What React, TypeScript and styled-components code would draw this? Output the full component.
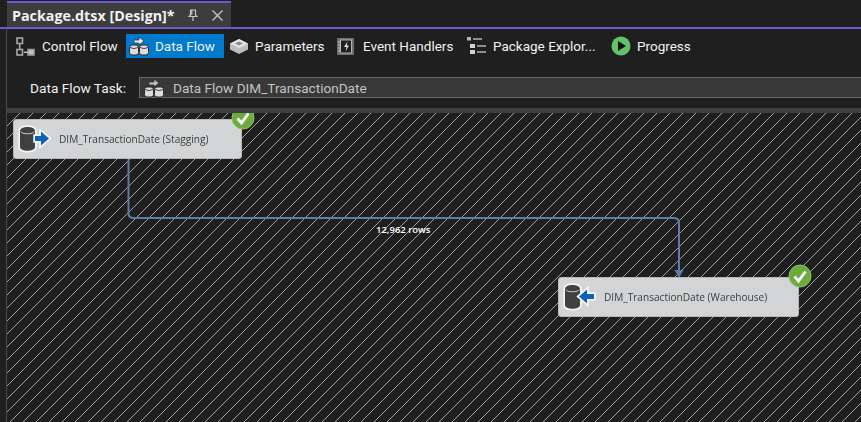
import { FC } from 'react';
import styled, { createGlobalStyle } from 'styled-components';

const GlobalStyle = createGlobalStyle`
  html, body {
    margin: 0;
    padding: 0;
    width: 861px;
    height: 422px;
    overflow: hidden;
    background: #1f1f1f;
    font-family: "Open Sans", "Noto Sans", sans-serif;
  }
`;

const Page = styled.div`
  width: 861px;
  height: 422px;
  display: flex;
  flex-direction: column;
  background: #1f1f1f;
  color: #f1f1f1;
  overflow: hidden;
`;

const TabStrip = styled.div`
  height: 27px;
  padding-left: 7px;
  border-bottom: 2px solid #6a5acd;
  display: flex;
  flex-shrink: 0;
`;

const Tab = styled.div`
  width: 224px;
  height: 26px;
  margin-top: 1px;
  border-top: 2px solid #6a5acd;
  box-sizing: border-box;
  background: #3d3d3d;
  display: flex;
  align-items: center;
  padding-left: 5px;
`;

const TabTitle = styled.span`
  font-size: 14.300px;
  font-weight: 700;
  white-space: nowrap;
  width: 176px;
  color: #f1f1f1;
`;

const PinIcon = styled.svg`
  flex-shrink: 0;
`;

const CloseIcon = styled.svg`
  margin-left: 14px;
  flex-shrink: 0;
`;

const Body = styled.div`
  flex: 1;
  margin-left: 6px;
  border-left: 1px solid #4a4a4a;
  display: flex;
  flex-direction: column;
  min-height: 0;
`;

const Toolbar = styled.div`
  height: 24px;
  margin-top: 5px;
  padding-left: 6px;
  display: flex;
  align-items: center;
  flex-shrink: 0;
`;

const ToolItem = styled.div<{ $active?: boolean; $width: number; $after?: number }>`
  width: ${p => p.$width}px;
  margin-right: ${p => p.$after ?? 0}px;
  height: 24px;
  box-sizing: border-box;
  display: flex;
  align-items: center;
  padding-left: 3px;
  font-family: "Roboto", "Open Sans", sans-serif;
  font-size: 13.500px;
  white-space: nowrap;
  color: #f1f1f1;
  background: ${p => (p.$active ? '#007acc' : 'transparent')};
`;

const IconSlot = styled.span`
  width: 26px;
  height: 20px;
  flex-shrink: 0;
  display: flex;
  align-items: center;
`;

const TaskRow = styled.div`
  height: 21px;
  margin-top: 19px;
  padding-left: 23px;
  display: flex;
  align-items: center;
  flex-shrink: 0;
`;

const TaskLabel = styled.span`
  width: 109px;
  font-family: "Roboto", "Open Sans", sans-serif;
  font-size: 13.700px;
  white-space: nowrap;
`;

const Combo = styled.div`
  flex: 1;
  height: 21px;
  box-sizing: border-box;
  border: 1px solid #6a6a6a;
  border-right: none;
  background: #383838;
  display: flex;
  align-items: center;
  gap: 8px;
  padding-left: 4px;
  font-family: "Roboto", "Open Sans", sans-serif;
  font-size: 13.600px;
  color: #c4c4c4;
  white-space: nowrap;
`;

const Strip = styled.div`
  height: 5px;
  margin-top: 10px;
  background: #3c4043;
  flex-shrink: 0;
`;

const Canvas = styled.div`
  position: relative;
  flex: 1;
  background: #1f1f1f;
  overflow: hidden;
`;

const Drawing = styled.svg`
  position: absolute;
  left: 0;
  top: 0;
`;

const Node = styled.div<{ $x: number; $y: number; $width: number }>`
  position: absolute;
  left: ${p => p.$x}px;
  top: ${p => p.$y}px;
  width: ${p => p.$width}px;
  height: 40px;
  box-sizing: border-box;
  border-radius: 3px;
  background: #d3d4d6;
  border: 1px solid #b8b8b8;
  display: flex;
  align-items: center;
  padding-left: 3px;
`;

const NodeText = styled.span`
  margin-left: 8px;
  font-size: 10.100px;
  color: #3c3c3c;
  white-space: nowrap;
  filter: blur(0.25px);
`;

const Badge = styled.div`
  position: absolute;
  right: -14px;
  top: -14px;
  width: 24px;
  height: 24px;
`;

const RowLabel = styled.span`
  position: absolute;
  left: 369px;
  top: 110px;
  font-size: 9.500px;
  font-weight: 600;
  line-height: 14px;
  color: #fff;
  white-space: nowrap;
`;

const ControlFlowIcon = () => (
  <svg width="20" height="19" viewBox="0 0 20 19" fill="none" stroke="#a8a8a8" strokeWidth="1.600">
    <rect x="1" y="1" width="5.500" height="5.500" />
    <path d="M3.700 7v5" />
    <rect x="1" y="12.500" width="5.500" height="5.500" />
    <rect x="12" y="12.500" width="6" height="5.500" fill="#c4c4c4" stroke="#9a9a9a" />
    <path d="M8 15.300h4" strokeWidth="1.300" stroke="#d4d4d4" />
  </svg>
);

const DataFlowIcon: FC<{ dim?: boolean }> = ({ dim }) => (
  <svg width="21" height="20" viewBox="0 0 21 20">
    <path d="M5 4h5V1l5 4-5 4V7H5z" fill={dim ? '#bdbdbd' : '#ececec'} stroke="#2a2a2a" strokeWidth="0.700" />
    <rect x="0.500" y="9" width="9" height="10" rx="2.500" fill="#dcdcdc" stroke="#2b2b2b" strokeWidth="1" />
    <rect x="10.500" y="9" width="9" height="10" rx="2.500" fill="#dcdcdc" stroke="#2b2b2b" strokeWidth="1" />
    <path d="M1 11.500q4 2.200 8 0M11 11.500q4 2.200 8 0" fill="none" stroke="#444" strokeWidth="1" />
  </svg>
);

const ParametersIcon = () => (
  <svg width="20" height="18" viewBox="0 0 20 18">
    <path d="M1 6.500 10 2l9 4.500v6L10 17l-9-4.500z" fill="#bdbdbd" />
    <path d="M1 6.500 10 2l9 4.500-9 4.500z" fill="#e4e4e4" />
    <path d="M6 6.500 10 4.500l4 2-4 2z" fill="#8a8a8a" />
  </svg>
);

const EventIcon = () => (
  <svg width="17" height="17" viewBox="0 0 17 17">
    <rect x="0" y="0" width="17" height="17" fill="#6e6e6e" />
    <rect x="3.500" y="2" width="11" height="13" fill="#1f1f1f" stroke="#b0b0b0" strokeWidth="1" />
    <path d="M1 4h3M1 7h3M1 10h3M1 13h3" stroke="#d0d0d0" strokeWidth="1" />
    <path d="M10.500 3.500 7 9h2.500l-1 4.500L12 7.500H9.800z" fill="#dcdcdc" />
  </svg>
);

const ExplorerIcon = () => (
  <svg width="19" height="18" viewBox="0 0 19 18">
    <rect x="0" y="0" width="4" height="3.500" fill="#b5b5b5" />
    <rect x="6" y="1" width="9" height="2" fill="#8e8e8e" />
    <rect x="3" y="7" width="5" height="4" fill="#d2d2d2" />
    <rect x="10" y="8" width="9" height="2" fill="#8e8e8e" />
    <rect x="3" y="13" width="5" height="4" fill="#d2d2d2" />
    <rect x="10" y="14" width="9" height="2" fill="#8e8e8e" />
  </svg>
);

const ProgressIcon = () => (
  <svg width="20" height="20" viewBox="0 0 20 20">
    <circle cx="10" cy="10" r="9.500" fill="#63c167" />
    <path d="M7 5l8 5-8 5z" fill="#111" />
  </svg>
);

const CylinderIcon: FC<{ flow: 'out' | 'in' }> = ({ flow }) => (
  <svg width="34" height="28" viewBox="0 0 34 28">
    <g fill="#404040" stroke="#f4f4f4" strokeWidth="3.500" paintOrder="stroke">
      <path d="M3 6c0-5.500 15-5.500 15 0v16c0 5-15 5-15 0z" />
      {flow === 'out' ? (
        <path d="M18 11h6V6.500l8 7-8 7V16h-6z" fill="#0b62b6" />
      ) : (
        <path d="M32 11h-7V6.500l-8 7 8 7V16h7z" fill="#0b62b6" />
      )}
    </g>
    <path d="M3.500 6.500c1 3 13 3 14 0" fill="none" stroke="#d8d8d8" strokeWidth="0.900" />
  </svg>
);

const CheckBadge = () => (
  <svg width="24" height="24" viewBox="0 0 24 24">
    <circle cx="12" cy="12" r="11" fill="#6eab3f" stroke="#8dc063" strokeWidth="1" />
    <path d="M6.500 12.500 10.500 17 17.500 7.500" fill="none" stroke="#fff" strokeWidth="2.800" />
  </svg>
);

const App: FC = () => (
  <>
    <GlobalStyle />
    <Page>
      <TabStrip>
        <Tab>
          <TabTitle>Package.dtsx [Design]*</TabTitle>
          <PinIcon viewBox="0 0 10 12" width="10" height="12">
            <path d="M2.500 1h5v5L9 7.500H1L2.500 6zM5 7.500V12M3.800 1.500V6" fill="none" stroke="#c4c4c4" strokeWidth="1.200" />
          </PinIcon>
          <CloseIcon viewBox="0 0 11 11" width="11" height="11">
            <path d="M0.500 0.500l10 10M10.500 0.500l-10 10" stroke="#c4c4c4" strokeWidth="1.400" />
          </CloseIcon>
        </Tab>
      </TabStrip>
      <Body>
        <Toolbar>
          <ToolItem $width={113}>
            <IconSlot>
              <ControlFlowIcon />
            </IconSlot>
            Control Flow
          </ToolItem>
          <ToolItem $active $width={98} $after={2}>
            <IconSlot>
              <DataFlowIcon />
            </IconSlot>
            Data Flow
          </ToolItem>
          <ToolItem $width={108}>
            <IconSlot>
              <ParametersIcon />
            </IconSlot>
            Parameters
          </ToolItem>
          <ToolItem $width={130}>
            <IconSlot>
              <EventIcon />
            </IconSlot>
            Event Handlers
          </ToolItem>
          <ToolItem $width={144}>
            <IconSlot>
              <ExplorerIcon />
            </IconSlot>
            Package Explor...
          </ToolItem>
          <ToolItem $width={120}>
            <IconSlot>
              <ProgressIcon />
            </IconSlot>
            Progress
          </ToolItem>
        </Toolbar>
        <TaskRow>
          <TaskLabel>Data Flow Task:</TaskLabel>
          <Combo>
            <DataFlowIcon dim />
            Data Flow DIM_TransactionDate
          </Combo>
        </TaskRow>
        <Strip />
        <Canvas>
          <Drawing width="855" height="310">
            <defs>
              <pattern id="hatch" width="13" height="13" patternUnits="userSpaceOnUse">
                <path d="M-1 14 14 -1" stroke="#a2a2a2" strokeWidth="1" shapeRendering="crispEdges" />
              </pattern>
            </defs>
            <rect width="855" height="310" fill="url(#hatch)" />
            <path
              d="M121.500 46V100q0 5 5 5H667q5 0 5 5V158"
              fill="none"
              stroke="#5f7ba8"
              strokeWidth="2"
            />
            <path d="M667.500 157h9l-4.500 8z" fill="#5f7ba8" />
          </Drawing>
          <Node $x={6} $y={6} $width={229}>
            <CylinderIcon flow="out" />
            <NodeText>DIM_TransactionDate (Stagging)</NodeText>
            <Badge>
              <CheckBadge />
            </Badge>
          </Node>
          <RowLabel>12,962 rows</RowLabel>
          <Node $x={551} $y={164} $width={241}>
            <CylinderIcon flow="in" />
            <NodeText>DIM_TransactionDate (Warehouse)</NodeText>
            <Badge>
              <CheckBadge />
            </Badge>
          </Node>
        </Canvas>
      </Body>
    </Page>
  </>
);

export default App;
